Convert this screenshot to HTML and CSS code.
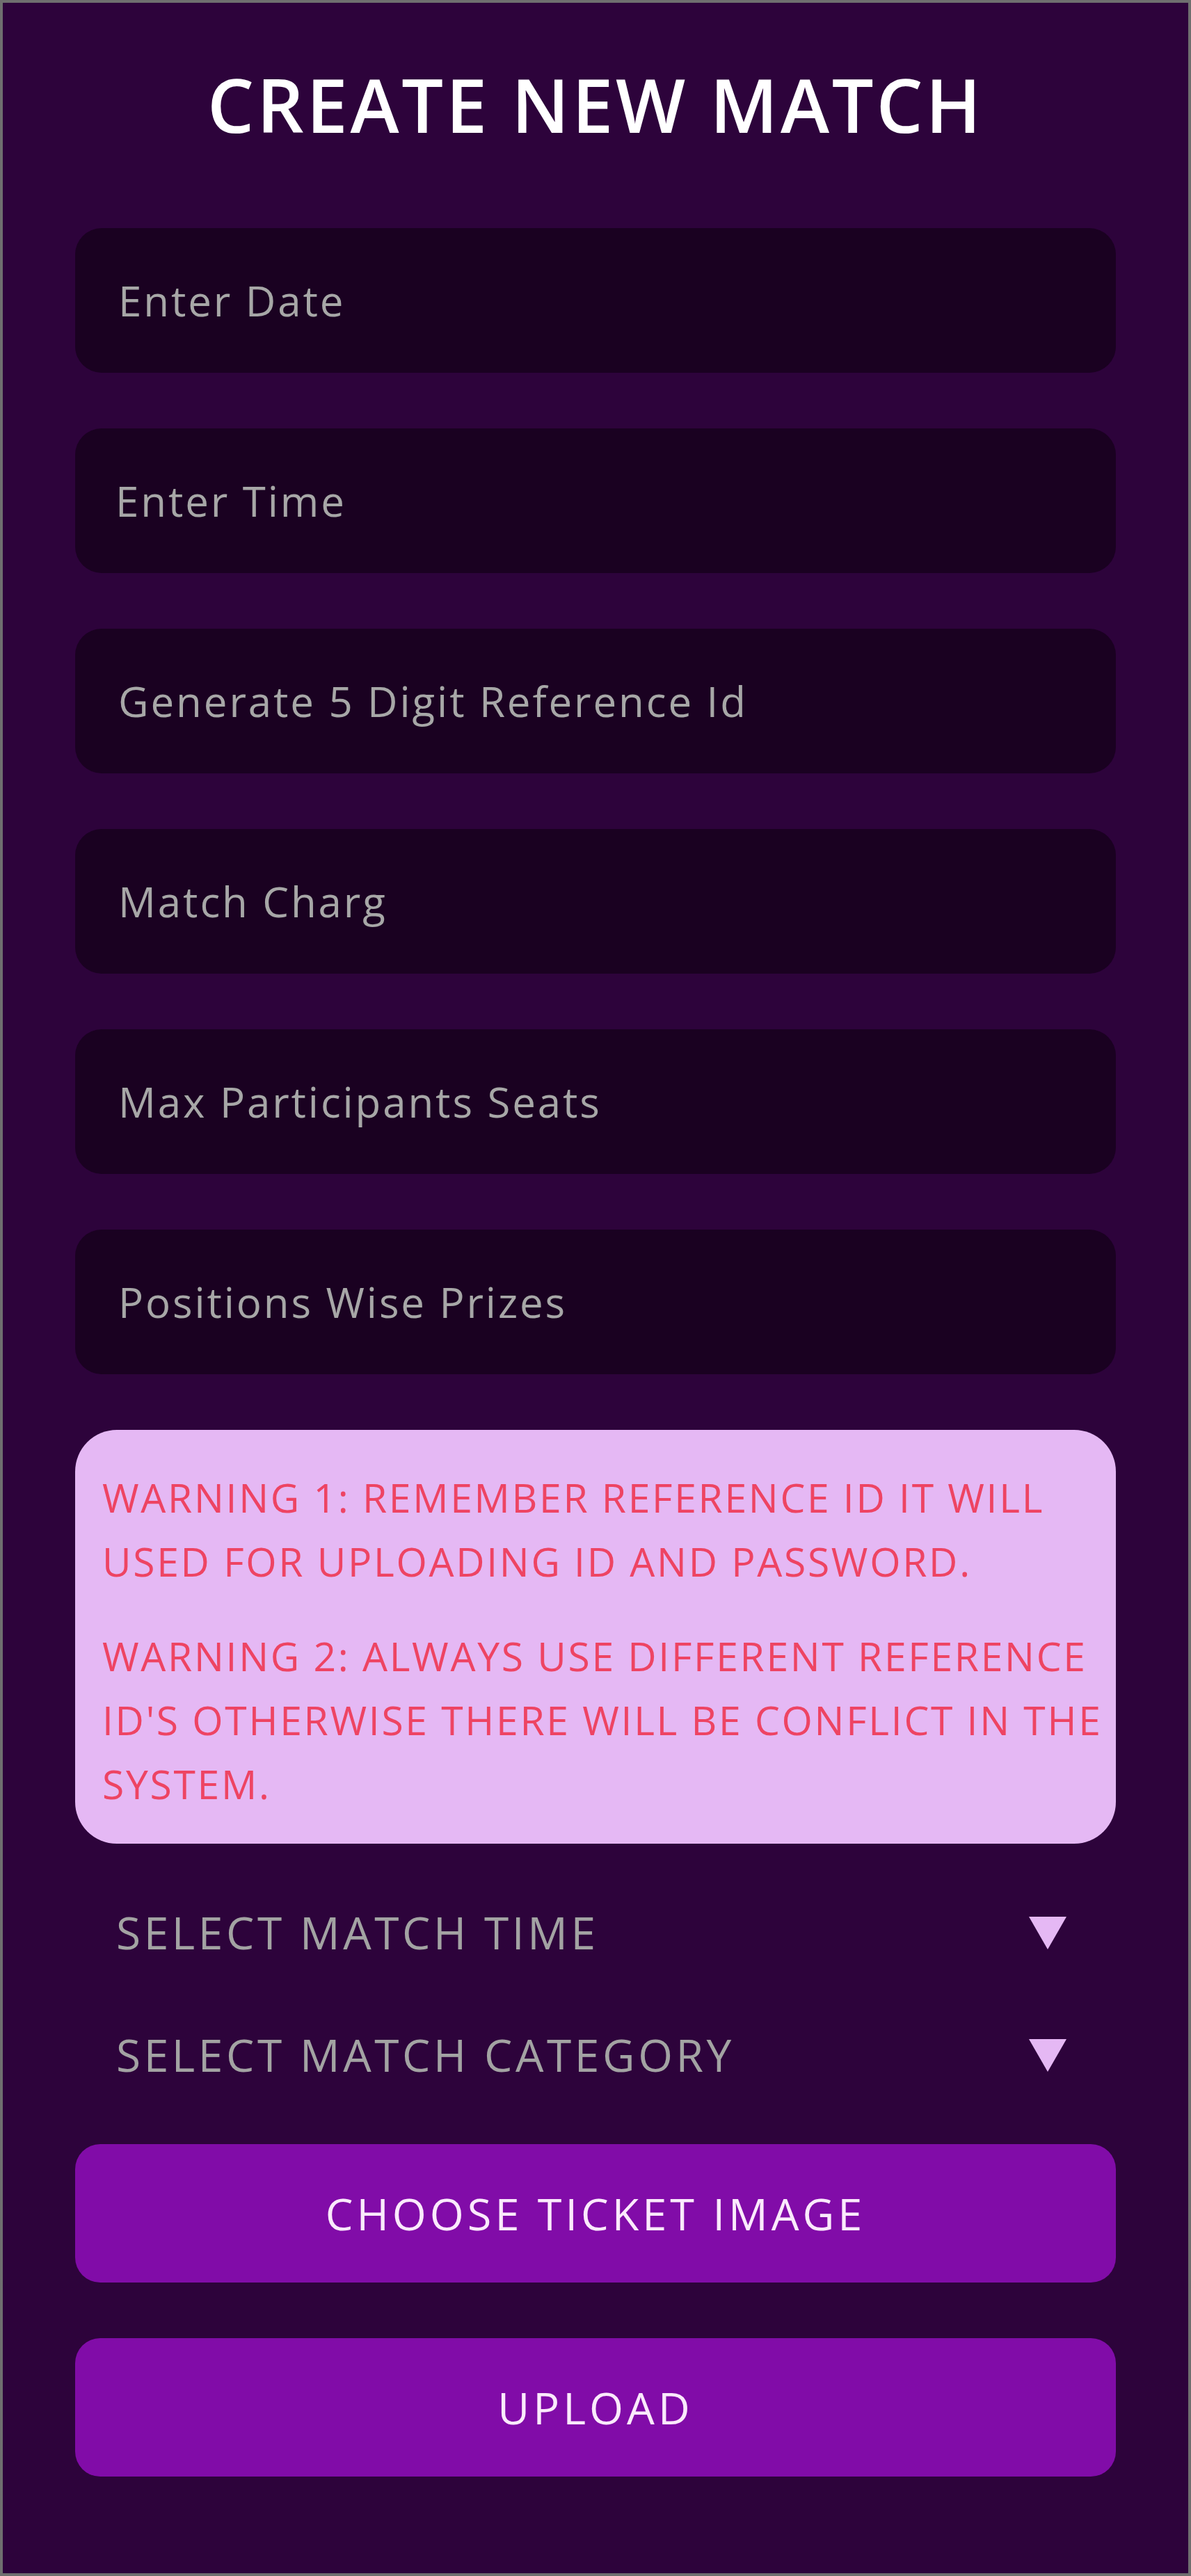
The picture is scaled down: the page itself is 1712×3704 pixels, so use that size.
FILE: index.html
```html
<!DOCTYPE html>
<html lang="en">
<head>
<meta charset="utf-8">
<title>Create New Match</title>
<link rel="stylesheet" href="styles.css">
</head>
<body>
<main class="page">
  <h1 class="title">CREATE NEW MATCH</h1>
  <form class="form">
    <div class="field"><span class="placeholder">Enter Date</span></div>
    <div class="field"><span class="placeholder placeholder--shift">Enter Time</span></div>
    <div class="field"><span class="placeholder">Generate 5 Digit Reference Id</span></div>
    <div class="field"><span class="placeholder">Match Charg</span></div>
    <div class="field"><span class="placeholder">Max Participants Seats</span></div>
    <div class="field"><span class="placeholder">Positions Wise Prizes</span></div>
    <div class="warning">
      <p class="warning-text">WARNING 1: REMEMBER REFERENCE ID IT WILL<br>USED FOR UPLOADING ID AND PASSWORD.</p>
      <p class="warning-text warning-text--second">WARNING 2: ALWAYS USE DIFFERENT REFERENCE<br>ID'S OTHERWISE THERE WILL BE CONFLICT IN THE<br>SYSTEM.</p>
    </div>
    <div class="select">
      <span class="select-label">SELECT MATCH TIME</span>
      <svg class="select-arrow" viewBox="0 0 54 47" width="54" height="47"><polygon points="0,0 54,0 27,47" fill="#e5b8f4"/></svg>
    </div>
    <div class="select">
      <span class="select-label">SELECT MATCH CATEGORY</span>
      <svg class="select-arrow" viewBox="0 0 54 47" width="54" height="47"><polygon points="0,0 54,0 27,47" fill="#e5b8f4"/></svg>
    </div>
    <div class="button"><span class="button-text">CHOOSE TICKET IMAGE</span></div>
    <div class="button"><span class="button-text">UPLOAD</span></div>
  </form>
</main>
</body>
</html>
```

FILE: styles.css
```css
* {
  box-sizing: border-box;
}

html, body {
  margin: 0;
  padding: 0;
  background: #6f6f6f;
}

body {
  font-family: "Open Sans", "Noto Sans", sans-serif;
}

.page {
  width: 1712px;
  height: 3704px;
  border: 4px solid #6f6f6f;
  background: #2d033b;
  padding: 81px 104px 0;
  display: flex;
  flex-direction: column;
}

.title {
  margin: 0;
  font-size: 106px;
  line-height: 130px;
  font-weight: 600;
  color: #ffffff;
  text-align: center;
  letter-spacing: 3.8px;
}

.form {
  margin-top: 113px;
  display: flex;
  flex-direction: column;
  gap: 80px;
}

.field {
  height: 208px;
  border-radius: 38px;
  background: #1a0121;
  display: flex;
  align-items: center;
  padding-left: 62px;
}

.placeholder {
  font-size: 60px;
  line-height: 80px;
  color: #a7a7a7;
  letter-spacing: 2.9px;
}

.placeholder--shift {
  margin-left: -4px;
}

.warning {
  border-radius: 60px;
  background: #e5b8f4;
  padding: 51px 20px 40px 39px;
}

.warning-text {
  margin: 0;
  font-size: 57px;
  line-height: 92px;
  color: #ee4463;
  white-space: nowrap;
  letter-spacing: 2.7px;
}

.warning-text--second {
  margin-top: 44px;
}

.select {
  height: 96px;
  display: flex;
  align-items: center;
  justify-content: space-between;
  padding: 0 71px 0 59px;
}

.select-label {
  font-size: 64px;
  line-height: 80px;
  color: #a3a3a3;
  letter-spacing: 4.6px;
}

.select-arrow {
  display: block;
}

.button {
  height: 199px;
  border-radius: 36px;
  background: #810ca8;
  display: flex;
  align-items: center;
  justify-content: center;
}

.button-text {
  font-size: 63px;
  line-height: 80px;
  color: #fbeafc;
  letter-spacing: 5px;
}
```
